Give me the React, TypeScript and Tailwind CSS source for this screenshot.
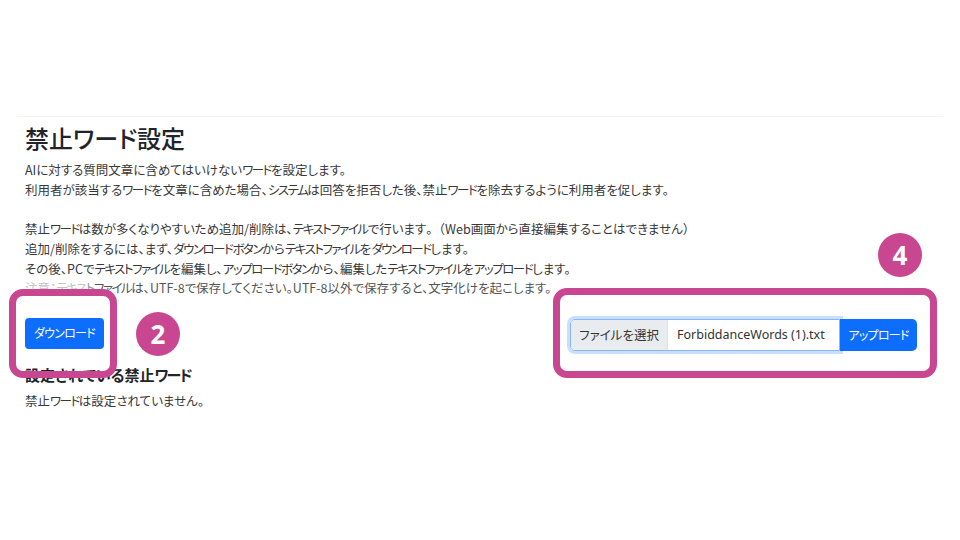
import React from "react";

const jp = { fontFamily: '"Noto Sans CJK JP", "Noto Sans", sans-serif', fontFeatureSettings: '"palt"' };

function kt(text: string): React.ReactNode[] {
  const parts = text.split(/([\u30A1-\u30FA\u30FC]+)/);
  return parts.map((p, i) =>
    /^[\u30A1-\u30FA\u30FC]+$/.test(p) ? (
      <span key={i} className="tracking-[-0.12em]">
        {p}
      </span>
    ) : (
      <React.Fragment key={i}>{p}</React.Fragment>
    )
  );
}

export default function App() {
  return (
    <div className="relative w-[960px] h-[540px] overflow-hidden bg-white" style={jp}>
      <div className="mt-[116px] mx-[17px] border-t border-[#f1f1f1]" />
      <div className="pl-[25px] pr-[43px]">
        <h1 className="mt-[7px] text-[24px] leading-[28px] font-medium text-[#212529]">禁止ワード設定</h1>
        <div className="mt-[8px] text-[12.5px] leading-[19.7px] text-[#383838]">
          <p>{kt("AIに対する質問文章に含めてはいけないワードを設定します。")}</p>
          <p>{kt("利用者が該当するワードを文章に含めた場合、システムは回答を拒否した後、禁止ワードを除去するように利用者を促します。")}</p>
          <p>&nbsp;</p>
          <p>
            {kt("禁止ワードは数が多くなりやすいため追加/削除は、テキストファイルで行います")}
            <span className="[font-feature-settings:normal]">。（</span>
            {kt("Web画面から直接編集することはできません")}
            <span className="[font-feature-settings:normal]">）</span>
          </p>
          <p>{kt("追加/削除をするには、まず、ダウンロードボタンからテキストファイルをダウンロードします。")}</p>
          <p>{kt("その後、PCでテキストファイルを編集し、アップロードボタンから、編集したテキストファイルをアップロードします。")}</p>
          <p className="text-[#555]">
            <span className="text-[#c4c4c4]">
              注意：<span className="tracking-[-0.12em]">テキス</span>
            </span>
            <span className="text-[#9a9a9a] tracking-[-0.12em]">ト</span>
            {kt("ファイルは、UTF-8で保存してください。UTF-8以外で保存すると、文字化けを起こします。")}
          </p>
        </div>
        <div className="mt-[20px] flex items-start justify-between">
          <button className="h-[31px] w-[79px] rounded-[4px] bg-[#0d6efd] text-[12px] text-white">
            <span className="tracking-[-0.06em]">ダウンロード</span>
          </button>
          <div className="mt-[1px] flex h-[32px]">
            <div className="flex h-[32px] w-[270px] overflow-hidden rounded-l-[5px] border-[1.5px] border-[#86b7fe] shadow-[0_0_0_3px_rgba(13,110,253,0.22)]">
              <div className="flex w-[97px] items-center justify-center border-r border-[#dee2e6] bg-[#e9ecef] text-[12.5px] text-[#333]">
                ファイルを選択
              </div>
              <div
                className="flex flex-1 items-center bg-white pl-[9px] text-[12.5px] text-[#333]"
                style={{ fontFamily: '"Noto Sans", sans-serif' }}
              >
                ForbiddanceWords (1).txt
              </div>
            </div>
            <button className="h-[32px] w-[77px] rounded-r-[5px] bg-[#0d6efd] text-[12px] text-white">
              <span className="tracking-[-0.06em]">アップロード</span>
            </button>
          </div>
        </div>
        <h2 className="mt-[12px] text-[15px] leading-[24px] font-bold text-[#212529]">{kt("設定されている禁止ワード")}</h2>
        <p className="mt-[4px] text-[12.5px] leading-[20px] text-[#383838]">{kt("禁止ワードは設定されていません。")}</p>
      </div>

      <div className="absolute left-[9px] top-[289px] h-[89px] w-[108px] rounded-[14px] border-[7px] border-[#c94790]" />
      <div className="absolute left-[553px] top-[288px] h-[90px] w-[384px] rounded-[14px] border-[7px] border-[#c94790]" />
      <div
        className="absolute left-[136px] top-[312px] flex h-[44px] w-[44px] items-center justify-center rounded-full bg-[#c94790] text-[26px] font-bold text-white"
        style={{ fontFamily: '"Open Sans", sans-serif' }}
      >
        2
      </div>
      <div
        className="absolute left-[878px] top-[233px] flex h-[44px] w-[44px] items-center justify-center rounded-full bg-[#c94790] text-[26px] font-bold text-white"
        style={{ fontFamily: '"Open Sans", sans-serif' }}
      >
        4
      </div>
    </div>
  );
}
